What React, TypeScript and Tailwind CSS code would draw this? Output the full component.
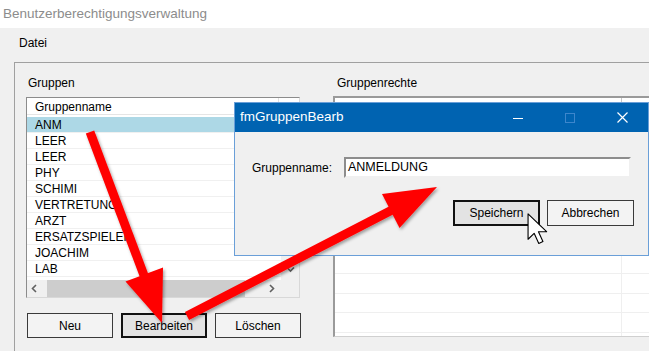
import React from "react";

const groups = ["ANM", "LEER", "LEER", "PHY", "SCHIMI", "VERTRETUNG", "ARZT", "ERSATZSPIELER", "JOACHIM", "LAB"];

function Chevron({ dir }: { dir: "left" | "right" | "down" }) {
  const pts = dir === "left" ? "5,1 1.5,4.5 5,8" : dir === "right" ? "2,1 5.5,4.5 2,8" : "1,2.5 4.5,6 8,2.5";
  return (
    <svg width="9" height="9" viewBox="0 0 9 9">
      <polyline points={pts} fill="none" stroke="#606060" strokeWidth="1.6" />
    </svg>
  );
}

function Button({ label, focused, w = "w-[86px]", h = "h-[25px]" }: { label: string; focused?: boolean; w?: string; h?: string }) {
  return (
    <div
      className={`flex ${w} ${h} items-center justify-center ${
        focused ? "border-2 border-[#111] bg-[#e3e3e3]" : "border border-[#3a3a3a] bg-[#f3f3f3]"
      }`}
    >
      {label}
    </div>
  );
}

function Arrows() {
  return (
    <svg className="pointer-events-none absolute left-0 top-0" width="649" height="351" viewBox="0 0 649 351">
      <defs>
        <filter id="sh" x="-20%" y="-20%" width="140%" height="140%">
          <feDropShadow dx="1.5" dy="2" stdDeviation="1.6" floodColor="#000" floodOpacity="0.35" />
        </filter>
      </defs>
      <g fill="#ff0000" stroke="none" filter="url(#sh)">
        <line x1="90" y1="132" x2="145" y2="278" stroke="#ff0000" strokeWidth="9" />
        <polygon points="162,323 125.5,281.5 163,267.5" />
        <line x1="187" y1="316" x2="392" y2="210" stroke="#ff0000" strokeWidth="9" />
        <polygon points="437,187 399.5,228 382,194" />
      </g>
    </svg>
  );
}

function Cursor() {
  return (
    <svg className="pointer-events-none absolute left-[527px] top-[213px]" width="21" height="32" viewBox="0 0 13 20">
      <path
        d="M0.6,0.6 L0.6,16.4 L4.4,12.7 L7.3,19 L9.9,17.8 L7.1,11.7 L12.2,11.7 Z"
        fill="#fff"
        stroke="#000"
        strokeWidth="0.7"
        strokeLinejoin="round"
      />
    </svg>
  );
}

function Dialog() {
  return (
    <div className="absolute left-[234px] top-[102px] flex h-[154px] w-[415px] flex-col border border-[#6a9fd8] bg-[#f0f0f0]">
      <div className="flex h-[29px] items-center bg-[#0063b1] text-white">
        <span className="pl-[5px] text-[13.5px]">fmGruppenBearb</span>
        <div className="ml-auto flex h-full">
          <div className="flex w-[52px] items-center justify-center">
            <svg width="10" height="10" viewBox="0 0 10 10">
              <line x1="0" y1="5.5" x2="10" y2="5.5" stroke="#fff" strokeWidth="1" />
            </svg>
          </div>
          <div className="flex w-[52px] items-center justify-center">
            <svg width="10" height="10" viewBox="0 0 10 10">
              <rect x="0.5" y="0.5" width="9" height="9" fill="none" stroke="#3d86cc" strokeWidth="1" />
            </svg>
          </div>
          <div className="flex w-[52px] items-center justify-center">
            <svg width="11" height="11" viewBox="0 0 11 11">
              <path d="M0.5,0.5 L10.5,10.5 M10.5,0.5 L0.5,10.5" stroke="#fff" strokeWidth="1.2" />
            </svg>
          </div>
        </div>
      </div>
      <div className="flex flex-1 flex-col pl-[17px] pt-[25px]">
        <div className="flex items-center">
          <span className="w-[92px]">Gruppenname:</span>
          <div className="flex h-[21px] w-[287px] items-center border-2 border-b-[#f0f0f0] border-l-[#8d8d8d] border-r-[#f0f0f0] border-t-[#8d8d8d] bg-white pl-[2px] text-[12.5px]">
            ANMELDUNG
          </div>
        </div>
        <div className="mt-[22px] flex justify-end gap-[7px] pr-[14px]">
          <Button label="Speichern" focused w="w-[87px]" h="h-[26px]" />
          <Button label="Abbrechen" w="w-[87px]" h="h-[26px]" />
        </div>
      </div>
    </div>
  );
}

export default function App() {
  return (
    <div className="relative h-[351px] w-[649px] overflow-hidden bg-[#f0f0f0] font-['Liberation_Sans',Arial,sans-serif] text-[12px] text-black">
      <div className="flex h-[28px] items-center bg-white pl-[3px] text-[13.5px] text-[#8c8c8c]">
        Benutzerberechtigungsverwaltung
      </div>
      <div className="flex h-[30px] items-center pl-[19px]">Datei</div>

      <div className="ml-[14px] mt-[4px] flex h-[300px] border-l border-t border-[#a0a0a0] pl-[11px] pt-[13px]">
        {/* Gruppen */}
        <div className="flex w-[275px] flex-col">
          <div className="h-[14px] pl-[2px] leading-[14px]">Gruppen</div>
          <div className="mt-[7px] flex h-[201px] w-[274px] flex-col border border-[#8c8c8c] border-b-[#d8d8d8] border-r-[#d8d8d8] bg-white">
            <div className="flex h-[17px] border-b border-[#e5e5e5]">
              <div className="w-[252px] border-r border-[#e0e0e0] pl-[8px] pt-[1px] leading-[16px]">Gruppenname</div>
            </div>
            <div className="flex flex-1">
              <div className="flex-1 pt-[2px]">
                {groups.map((g, i) => (
                  <div
                    key={i}
                    className={`h-[16px] border-b border-[#f0f0f0] pl-[8px] pt-[1px] leading-[15px] ${i === 0 ? "bg-[#add8e6]" : ""}`}
                  >
                    {g}
                  </div>
                ))}
              </div>
              <div className="flex w-[18px] flex-col justify-end bg-[#f0f0f0]">
                <div className="flex h-[22px] items-center justify-center">
                  <Chevron dir="down" />
                </div>
              </div>
            </div>
            <div className="flex h-[17px] bg-[#f0f0f0]">
              <div className="flex w-[17px] items-center justify-center">
                <Chevron dir="left" />
              </div>
              <div className="ml-[3px] w-[198px] bg-[#cdcdcd]" />
              <div className="ml-auto flex w-[17px] items-center justify-center">
                <Chevron dir="right" />
              </div>
              <div className="w-[18px]" />
            </div>
          </div>
          <div className="mt-[15px] flex gap-[8px] pl-[1px]">
            <Button label="Neu" />
            <Button label="Bearbeiten" focused />
            <Button label="Löschen" />
          </div>
        </div>

        {/* Gruppenrechte */}
        <div className="ml-[32px] flex flex-col">
          <div className="h-[14px] pl-[4px] leading-[14px]">Gruppenrechte</div>
          <div className="mt-[6px] flex h-[241px] w-[330px] flex-col overflow-hidden border-b border-l-2 border-t-2 border-[#9a9a9a] border-b-[#d0d0d0] bg-white">
            <div className="flex h-[17px] shrink-0 border-b border-[#e5e5e5]">
              <div className="w-[287px] border-r border-[#c8c8c8] pl-[8px] pt-[2px] leading-[16px]">Recht</div>
              <div className="pl-[8px] pt-[2px] leading-[16px]">W</div>
            </div>
            <div className="pt-[3px]">
              {Array.from({ length: 12 }).map((_, i) => (
                <div key={i} className="flex h-[19.5px] border-b border-[#efefef]">
                  <div className="w-[287px] border-r border-[#efefef]" />
                </div>
              ))}
            </div>
          </div>
        </div>
      </div>

      <Dialog />
      <Arrows />
      <Cursor />
    </div>
  );
}
